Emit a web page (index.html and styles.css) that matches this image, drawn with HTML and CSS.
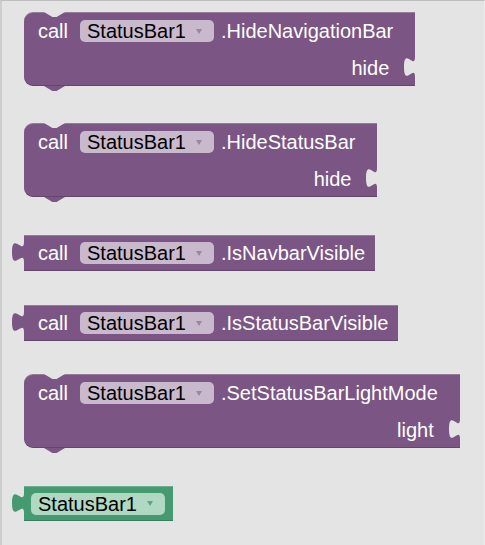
FILE: index.html
```html
<!DOCTYPE html>
<html>
<head>
<meta charset="utf-8">
<link rel="stylesheet" href="styles.css">
</head>
<body>
<div class="ws">
  <div class="block stmt">
    <div class="row r1"><span class="kw">call</span><span class="pill">StatusBar1<span class="arr"></span></span><span class="meth">.HideNavigationBar</span></div>
    <div class="row r2"><span class="arg">hide</span><svg class="sock" viewBox="0 0 8 15" preserveAspectRatio="none"><path d="M8,0 C8,10 0,-8 0,7.5 C0,23 8,5 8,15 Z"/></svg></div>
  </div>

  <div class="block stmt gap37b">
    <div class="row r1"><span class="kw">call</span><span class="pill">StatusBar1<span class="arr"></span></span><span class="meth">.HideStatusBar</span></div>
    <div class="row r2"><span class="arg">hide</span><svg class="sock" viewBox="0 0 8 15" preserveAspectRatio="none"><path d="M8,0 C8,10 0,-8 0,7.5 C0,23 8,5 8,15 Z"/></svg></div>
  </div>

  <div class="value gap38">
    <svg class="tab" viewBox="0 0 8 15" preserveAspectRatio="none"><path d="M8,0 C8,10 0,-8 0,7.5 C0,23 8,5 8,15 Z"/></svg>
    <div class="block vblock">
      <div class="row rv"><span class="kw">call</span><span class="pill">StatusBar1<span class="arr"></span></span><span class="meth">.IsNavbarVisible</span></div>
    </div>
  </div>

  <div class="value gap34">
    <svg class="tab" viewBox="0 0 8 15" preserveAspectRatio="none"><path d="M8,0 C8,10 0,-8 0,7.5 C0,23 8,5 8,15 Z"/></svg>
    <div class="block vblock">
      <div class="row rv"><span class="kw">call</span><span class="pill">StatusBar1<span class="arr"></span></span><span class="meth">.IsStatusBarVisible</span></div>
    </div>
  </div>

  <div class="block stmt gap33">
    <div class="row r1"><span class="kw">call</span><span class="pill">StatusBar1<span class="arr"></span></span><span class="meth">.SetStatusBarLightMode</span></div>
    <div class="row r2"><span class="arg">light</span><svg class="sock" viewBox="0 0 8 15" preserveAspectRatio="none"><path d="M8,0 C8,10 0,-8 0,7.5 C0,23 8,5 8,15 Z"/></svg></div>
  </div>

  <div class="value green gap38">
    <svg class="tab" viewBox="0 0 8 15" preserveAspectRatio="none"><path d="M8,0 C8,10 0,-8 0,7.5 C0,23 8,5 8,15 Z"/></svg>
    <div class="block gblock">
      <div class="row rg"><span class="pill">StatusBar1<span class="arr"></span></span></div>
    </div>
  </div>
</div>
</body>
</html>
```

FILE: styles.css
```css
html, body {
  margin: 0;
  padding: 0;
}
body {
  font-family: "Liberation Sans", Arial, sans-serif;
  font-size: 20px;
  background: #e4e4e4;
}
.ws {
  box-sizing: border-box;
  min-height: 545px;
  width: 485px;
  background: #e4e4e4;
  border-top: 1px solid #bdbdbd;
  border-left: 2px solid #cdcdcd;
  border-right: 1px solid #ececec;
  padding: 11px 0 0 10px;
  display: flex;
  flex-direction: column;
  align-items: flex-start;
}
.block {
  position: relative;
  background: #7b5584;
  box-shadow: inset 0 1px 0 rgba(255,255,255,0.22), inset 0 -1px 0 rgba(0,0,0,0.18);
  color: #fff;
  line-height: 22px;
  white-space: nowrap;
}
.stmt {
  margin-left: 12px;
  border-radius: 9px 0 0 9px;
}
.stmt::before,
.stmt::after {
  content: "";
  position: absolute;
  left: 20px;
  width: 21px;
  height: 5px;
  clip-path: polygon(0 0, 100% 0, 60% 100%, 40% 100%);
}
.stmt::before {
  top: 0;
  background: #e4e4e4;
}
.stmt::after {
  top: 100%;
  background: #7b5584;
}
.row {
  display: flex;
  align-items: center;
}
.r1 {
  height: 38px;
  padding: 0 22px 0 14px;
}
.r2 {
  height: 36px;
  justify-content: flex-end;
}
.rv {
  height: 36px;
  padding: 0 10px 0 14px;
}
.rg {
  height: 35px;
  padding: 0 8px 0 7px;
}
.kw {
  margin-right: 12px;
}
.meth {
  margin-left: 7px;
}
.arg {
  margin-right: 15px;
}
.pill {
  display: flex;
  align-items: center;
  height: 22px;
  padding: 0 12px 0 7px;
  border-radius: 5px;
  background: #c9b9cd;
  color: #000;
}
.arr {
  width: 0;
  height: 0;
  margin-left: 10px;
  border-left: 3.5px solid transparent;
  border-right: 3.5px solid transparent;
  border-top: 5px solid #9c85a2;
}
.sock {
  align-self: flex-start;
  margin-top: 7px;
  width: 11px;
  height: 20px;
  overflow: visible;
  fill: #e4e4e4;
}
.value {
  display: flex;
  align-items: flex-start;
}
.tab {
  margin-top: 7px;
  width: 12px;
  height: 20px;
  overflow: visible;
  fill: #7b5584;
  flex: none;
}
.green .tab {
  fill: #459a71;
}
.gblock {
  background: #459a71;
}
.gblock .pill {
  background: #b0d8c3;
}
.gblock .arr {
  border-top-color: #5ba882;
}
.gap37b { margin-top: 37px; }
.gap38 { margin-top: 38px; }
.gap34 { margin-top: 34px; }
.gap33 { margin-top: 33px; }
```
